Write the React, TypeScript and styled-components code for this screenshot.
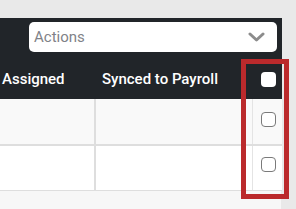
import React from "react";
import styled, { createGlobalStyle } from "styled-components";

const Global = createGlobalStyle`
  html, body { margin: 0; padding: 0; }
  body {
    background: #e9e9e9;
    width: 296px;
    height: 209px;
    overflow: hidden;
    font-family: Roboto, "Liberation Sans", sans-serif;
  }
`;

const Page = styled.div`
  position: relative;
  width: 296px;
  height: 209px;
  padding-top: 18px;
  box-sizing: border-box;
`;

const Panel = styled.div`
  width: 281px;
  background: #f7f7f7;
  height: 191px;
`;

const Dark = styled.div`
  background: #212529;
  padding: 4px 0 0 29px;
  width: 282px;
  box-sizing: border-box;
`;

const Select = styled.div`
  width: 248px;
  height: 30px;
  box-sizing: border-box;
  background: #fff;
  border-radius: 5px;
  display: flex;
  align-items: center;
  justify-content: space-between;
  padding: 0 12px 0 5px;
  color: #7f8288;
  font-size: 15px;
`;

const HeaderRow = styled.div`
  display: grid;
  grid-template-columns: 96px 157px 1fr;
  margin: 0 0 0 -29px;
  height: 47px;
  color: #fff;
  font-weight: 500;
  font-size: 15px;
`;

const HeadCell = styled.div<{ $pad?: number }>`
  display: flex;
  align-items: flex-end;
  padding: 0 0 11px ${(p) => p.$pad ?? 6}px;
  line-height: 18px;
`;

const HeadCheckCell = styled.div`
  display: flex;
  justify-content: center;
  padding-top: 20px;
  padding-left: 1px;
`;

const HeadBox = styled.div`
  width: 15px;
  height: 15px;
  border-radius: 4px;
  background: #fff;
`;

const Row = styled.div<{ $bg: string; $border: number }>`
  display: grid;
  grid-template-columns: 96px 157px 1fr;
  width: 282px;
  height: ${(p) => p.$border === 2 ? 47 : 45}px;
  box-sizing: border-box;
  background: ${(p) => p.$bg};
  border-bottom: ${(p) => p.$border}px solid #dedede;
`;

const Cell = styled.div<{ $bw: number; $bc: string }>`
  border-right: ${(p) => p.$bw}px solid ${(p) => p.$bc};
`;

const CheckCell = styled.div<{ $top: number }>`
  display: flex;
  justify-content: center;
  padding-top: ${(p) => p.$top}px;
  padding-left: 1px;
`;

const Box = styled.div`
  width: 15px;
  height: 15px;
  box-sizing: border-box;
  border: 1.5px solid #7a7a7a;
  border-radius: 4px;
  background: #fff;
`;

const Highlight = styled.div`
  position: absolute;
  left: 241px;
  top: 59px;
  width: 48px;
  height: 140px;
  box-sizing: border-box;
  border: 5px solid #bb2a2c;
  pointer-events: none;
`;

export default function App() {
  return (
    <>
      <Global />
      <Page>
        <Panel>
          <Dark>
            <Select>
              <span>Actions</span>
              <svg width="17" height="10" viewBox="0 0 17 10">
                <path d="M2 2 L8.5 8 L15 2" fill="none" stroke="#8c8c8c" strokeWidth="3" strokeLinecap="round" strokeLinejoin="round" />
              </svg>
            </Select>
            <HeaderRow>
              <HeadCell $pad={2}>Assigned</HeadCell>
              <HeadCell>Synced to Payroll</HeadCell>
              <HeadCheckCell>
                <HeadBox />
              </HeadCheckCell>
            </HeaderRow>
          </Dark>
          <Row $bg="#f9f9f9" $border={2}>
            <Cell $bw={2} $bc="#dedede" />
            <Cell $bw={1} $bc="#e4e4e4" />
            <CheckCell $top={13}>
              <Box />
            </CheckCell>
          </Row>
          <Row $bg="#ffffff" $border={1}>
            <Cell $bw={2} $bc="#dedede" />
            <Cell $bw={1} $bc="#e4e4e4" />
            <CheckCell $top={11}>
              <Box />
            </CheckCell>
          </Row>
        </Panel>
        <Highlight />
      </Page>
    </>
  );
}
